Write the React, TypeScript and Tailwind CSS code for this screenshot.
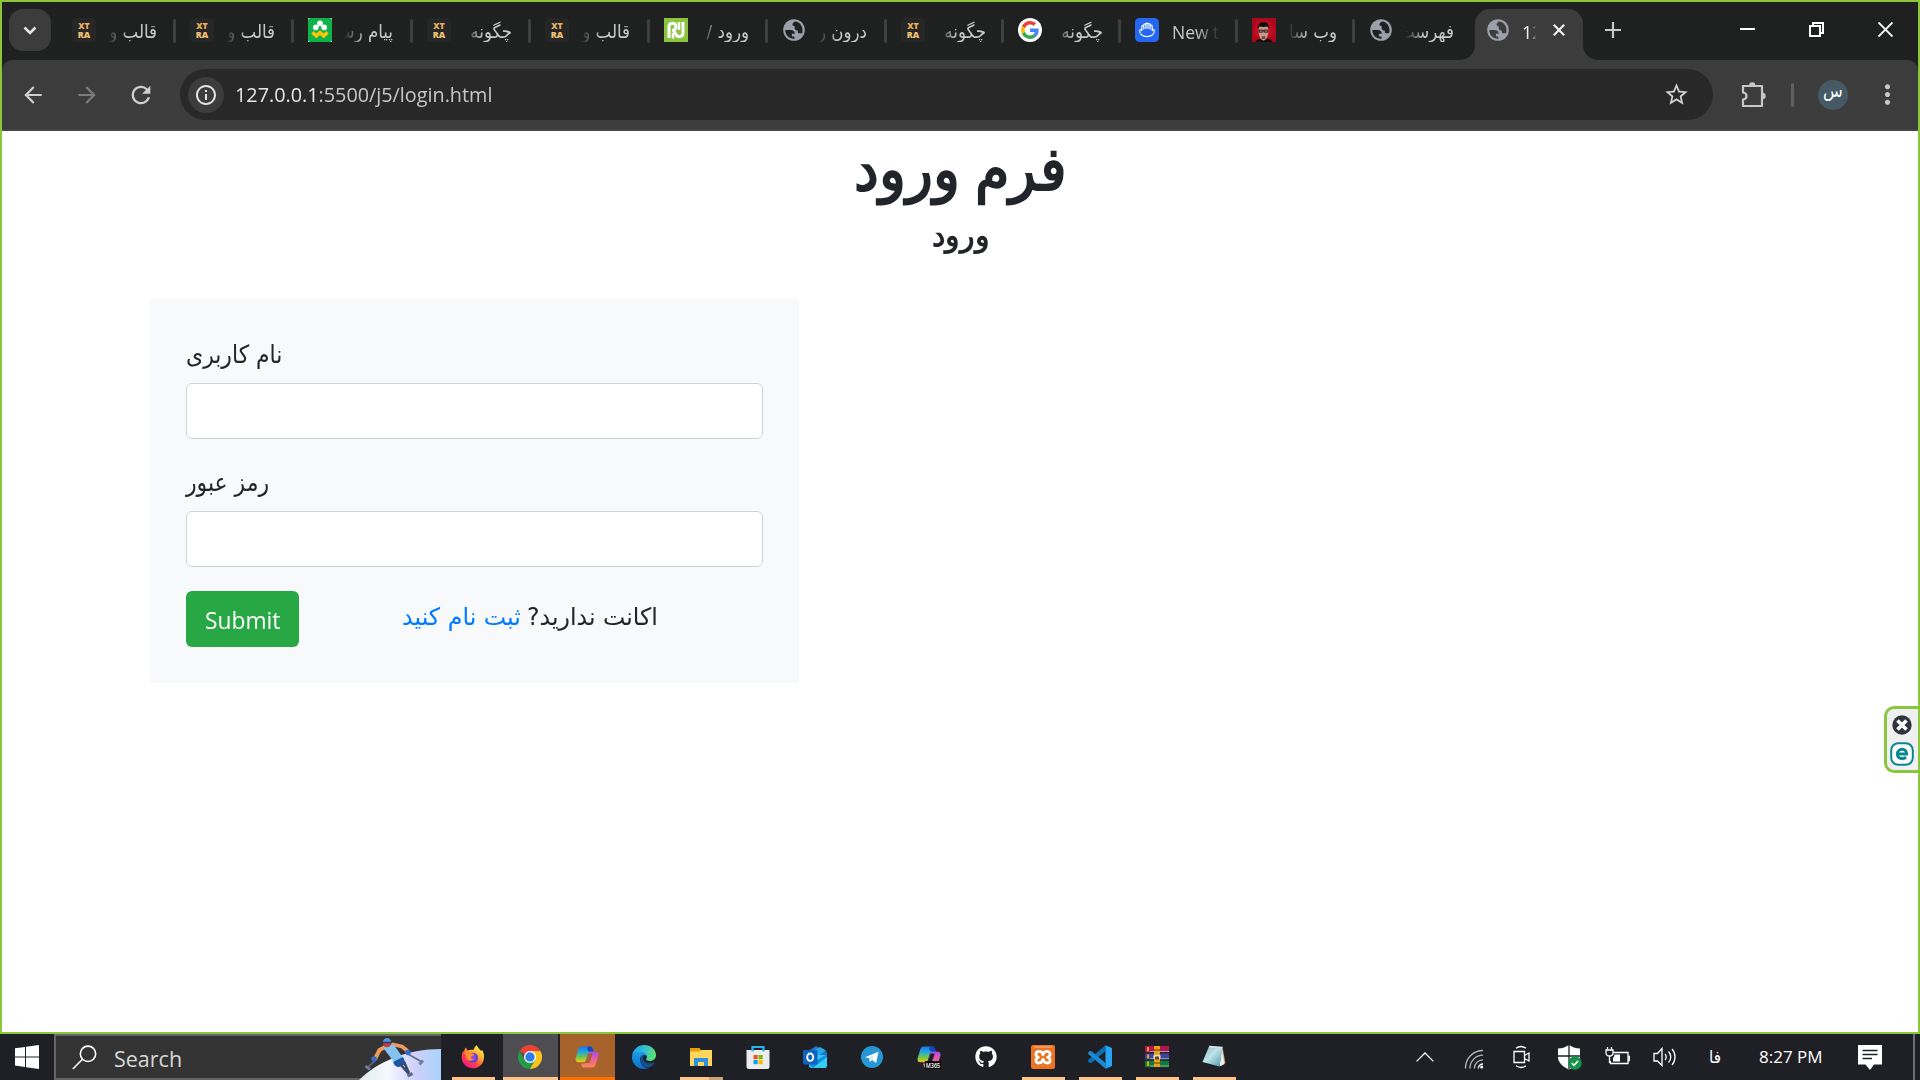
import type { ReactNode } from 'react';
import { MdArrowBack, MdArrowForward, MdStarBorder, MdRefresh, MdInfoOutline, MdMoreVert } from 'react-icons/md';
import { FaGithub } from 'react-icons/fa';

/* ---------- tab favicons ---------- */
const Xtra = () => (
  <svg viewBox="0 0 24 24" className="h-6 w-6">
    <rect width="24" height="24" rx="4" fill="#272626" />
    <text x="12" y="11.200" textAnchor="middle" textLength="11.500" lengthAdjust="spacingAndGlyphs" fontFamily="Open Sans, sans-serif" fontWeight="800" fontSize="8.6" fill="#e9b15c">XT</text>
    <text x="12" y="19.500" textAnchor="middle" textLength="12.5" lengthAdjust="spacingAndGlyphs" fontFamily="Open Sans, sans-serif" fontWeight="800" fontSize="8.6" fill="#f0c274">RA</text>
  </svg>
);
const Globe = ({ active }: { active?: boolean }) => (
  <svg viewBox="0 0 24 24" className="h-6 w-6 shrink-0">
    <circle cx="12" cy="12" r="10.800" fill="#9aa0aa" />
    <g className={active ? 'fill-[#3c3c3c]' : 'fill-[#1f2020]'}>
      <path d="M3.300 12h5.200c2.800 0 4.300 1.300 4.200 3.700h-2.800v2.700H12l1 2.200C7.800 21.300 3.300 17.500 3.300 12z" />
      <path d="M14.200 3.500c-2.400.2-3.700 1.500-3.700 3 0 1.200 1 1.700 2.200 1.700v1.900c0 1.600.9 2.300 2.300 2.300h.8v1.300c0 1 .7 1.500 1.700 1.500h2.700c1.200-5.300-1-10.200-6-11.700z" />
    </g>
  </svg>
);
const Messenger = () => (
  <svg viewBox="0 0 24 24" className="h-6 w-6">
    <rect width="24" height="24" fill="#fff" />
    <rect width="24" height="24" rx="2" fill="#0fb14b" />
    <g fill="#fff"><circle cx="12" cy="5.400" r="2.800" /><circle cx="7.800" cy="9.400" r="2.800" /><circle cx="16.200" cy="9.400" r="2.800" /></g>
    <path d="M4.500 14.300 8.300 18 12 14.500 15.700 18 19.500 14.300" fill="none" stroke="#fdc70c" strokeWidth="3.600" strokeLinejoin="round" />
  </svg>
);
const Rj = () => (
  <svg viewBox="0 0 24 24" className="h-6 w-6">
    <rect width="24" height="24" fill="#8bc540" />
    <g fill="none" stroke="#fff" strokeWidth="3" strokeLinejoin="round"><path d="M5 20V8.500C5 4 12 4 12 8.500c0 2-1 3.200-2.700 3.700L12 16.500c1.500 3 7 3 7-1.500V4" /><path d="M15 4v8" strokeWidth="2.500" /><path d="M9 15v5.500" strokeWidth="2.500" /></g>
  </svg>
);
const Google = () => (
  <svg viewBox="0 0 24 24" className="h-6 w-6">
    <circle cx="12" cy="12" r="12" fill="#fff" />
    <g transform="translate(3 3) scale(.375)">
      <path fill="#EA4335" d="M24 9.5c3.54 0 6.71 1.22 9.21 3.6l6.85-6.85C35.9 2.38 30.47 0 24 0 14.62 0 6.51 5.38 2.56 13.22l7.98 6.19C12.43 13.72 17.74 9.5 24 9.5z" />
      <path fill="#4285F4" d="M46.98 24.55c0-1.57-.15-3.09-.38-4.55H24v9.02h12.94c-.58 2.96-2.26 5.48-4.78 7.18l7.73 6c4.51-4.18 7.09-10.36 7.09-17.65z" />
      <path fill="#FBBC05" d="M10.53 28.59c-.48-1.45-.76-2.99-.76-4.59s.27-3.14.76-4.59l-7.98-6.19C.92 16.46 0 20.12 0 24c0 3.88.92 7.54 2.56 10.78l7.97-6.19z" />
      <path fill="#34A853" d="M24 48c6.48 0 11.93-2.13 15.89-5.81l-7.73-6c-2.15 1.45-4.92 2.3-8.16 2.3-6.26 0-11.57-4.22-13.47-9.91l-7.98 6.19C6.51 42.62 14.62 48 24 48z" />
    </g>
  </svg>
);
const Hand = () => (
  <svg viewBox="0 0 24 24" className="h-6 w-6">
    <rect width="24" height="24" rx="4.5" fill="#2468f2" />
    <path d="M4.700 12.600c0 3.600 3 6 7.300 6s7.300-2.400 7.300-6c0-1.500-2.100-1.500-2.100 0V8.200c0-1.500-2.100-1.500-2.100 0V6.700c0-1.500-2.100-1.500-2.100 0V6.200c0-1.500-2.100-1.500-2.100 0v.7c0-1.500-2.100-1.500-2.100 0v1.500c0-1.500-2-1.500-2 0v4.200c0-1.500-2.100-1.500-2.100 0zM8.800 8v3M10.900 7v3.500M13 6.700v3.800M15.100 8.200v2.800" fill="none" stroke="#fff" strokeWidth="1.200" strokeLinecap="round" strokeLinejoin="round" />
  </svg>
);
const Portrait = () => (
  <svg viewBox="0 0 24 24" className="h-6 w-6">
    <defs><radialGradient id="red"><stop offset="0" stopColor="#f0142c" /><stop offset="1" stopColor="#a8081c" /></radialGradient></defs>
    <rect width="24" height="24" fill="url(#red)" />
    <path d="M3.500 24c1-2.500 4-3.500 8.500-3.500s7.500 1 8.500 3.500z" fill="#160c0c" />
    <path d="M6.700 10c0-4 9.600-4 9.600 0v4c0 4-2.300 8.500-4.800 8.500s-4.800-4.500-4.800-8.500z" fill="#c9988a" />
    <path d="M6 11.500C3.500 1.500 19.500 1.500 17 11.500L15.800 8.500c-3 .6-5.500.6-8.600 0z" fill="#120d0e" />
    <path d="M7.200 12h3.600v2.200H7.200zM12.200 12h3.600v2.200h-3.600zM10.800 12.600h1.400" fill="#a5796f" stroke="#1b1315" strokeWidth=".8" />
    <path d="M9.500 18.300h4l-.7 2.700h-2.600z" fill="#6a4740" />
  </svg>
);

type TabInfo = { icon: ReactNode; title: string; w: string; ltr?: boolean; first?: boolean };
const tabs: TabInfo[] = [
  { icon: <Xtra />, title: 'قالب و', w: 'w-[118px]', first: true },
  { icon: <Xtra />, title: 'قالب و', w: 'w-[118px]' },
  { icon: <Messenger />, title: 'پیام رس', w: 'w-[119px]' },
  { icon: <Xtra />, title: 'چگونه', w: 'w-[118px]' },
  { icon: <Xtra />, title: 'قالب و', w: 'w-[119px]' },
  { icon: <Rj />, title: 'ورود /', w: 'w-[118px]' },
  { icon: <Globe />, title: 'درون ر', w: 'w-[119px]' },
  { icon: <Xtra />, title: 'چگونه', w: 'w-[117px]' },
  { icon: <Google />, title: 'چگونه', w: 'w-[117px]' },
  { icon: <Hand />, title: 'New t', w: 'w-[117px]', ltr: true },
  { icon: <Portrait />, title: 'وب سا', w: 'w-[117px]' },
  { icon: <Globe />, title: 'فهرست', w: 'w-[123px]' },
];

function Tab({ icon, title, w, ltr, first }: TabInfo) {
  return (
    <div className={`flex shrink-0 pt-4 ${w}`}>
      <div className={`mt-px h-6 w-[3px] rounded-sm ${first ? 'bg-transparent' : 'bg-[#3f3f3f]'}`} />
      <div className="ml-[14px] h-6 w-6">{icon}</div>
      <div
        dir={ltr ? 'ltr' : 'rtl'}
        className={
          ltr
            ? "ml-[13px] h-6 w-[48px] overflow-hidden whitespace-nowrap pt-px font-['Open_Sans','DejaVu_Sans_Condensed',sans-serif] text-[17.500px] leading-[26px] text-[#c9c9c9] [mask-image:linear-gradient(to_right,#000_50%,transparent)]"
            : "ml-3 h-6 w-[49px] overflow-hidden whitespace-nowrap pt-px font-['DejaVu_Sans_Condensed',sans-serif] text-[18.500px] leading-[26px] text-[#c9c9c9] [mask-image:linear-gradient(to_left,#000_60%,transparent)]"
        }
      >
        {title}
      </div>
    </div>
  );
}

function TabStrip() {
  return (
    <div className="flex h-[58px] bg-[#1f2020]">
      <div className="mt-[7px] mr-1 ml-[7px] flex h-[42px] w-[42px] shrink-0 items-center justify-center rounded-[14px] bg-[#3c3c3c]">
        <svg viewBox="0 0 14 9" className="h-[9px] w-[14px]"><path d="M1.500 1.500 7 7l5.500-5.500" fill="none" stroke="#e6e6e6" strokeWidth="2.600" /></svg>
      </div>
      {tabs.map((t, i) => <Tab key={i} {...t} />)}
      <div className="relative mt-[7px] flex h-[51px] w-[108px] shrink-0 items-start rounded-t-[15px] bg-[#3c3c3c] pt-[9px] pl-[11px]">
        <svg viewBox="0 0 15 15" className="absolute bottom-0 -left-[15px] h-[15px] w-[15px]"><path d="M15 0v15H0A15 15 0 0 0 15 0z" fill="#3c3c3c" /></svg>
        <svg viewBox="0 0 15 15" className="absolute -right-[15px] bottom-0 h-[15px] w-[15px]"><path d="M0 0v15h15A15 15 0 0 1 0 0z" fill="#3c3c3c" /></svg>
        <Globe active />
        <div className="ml-3 h-6 w-[14px] overflow-hidden pt-px font-['Open_Sans',sans-serif] text-[18px] leading-[26px] text-[#ececec] [mask-image:linear-gradient(to_right,#000_70%,transparent)]">12</div>
        <svg viewBox="0 0 12 12" className="mt-[6px] ml-[17px] h-3 w-3"><path d="m.8.8 10.400 10.400m0-10.400L.8 11.200" stroke="#f0f0f0" strokeWidth="2.200" /></svg>
      </div>
      <svg viewBox="0 0 16 16" className="mt-5 ml-[22px] h-4 w-4 shrink-0"><path d="M8 0v16M0 8h16" stroke="#c8c8c8" strokeWidth="2.200" /></svg>
      <svg viewBox="0 0 15 15" className="mt-5 ml-[119px] h-[15px] w-[15px] shrink-0"><path d="M0 7h15" stroke="#fff" strokeWidth="2" /></svg>
      <svg viewBox="0 0 15 15" className="mt-5 ml-[54px] h-[15px] w-[15px] shrink-0"><path d="M1 4h10v10H1zM4 4V1h10v10h-3" fill="none" stroke="#fff" strokeWidth="2" /></svg>
      <svg viewBox="0 0 15 15" className="mt-5 ml-[54px] h-[15px] w-[15px] shrink-0"><path d="m.5.5 14 14m0-14-14 14" stroke="#fff" strokeWidth="1.900" /></svg>
    </div>
  );
}

function Toolbar() {
  return (
    <div className="bg-[#1f2020]">
      <div className="flex h-[71px] items-center rounded-t-[10px] border-b-2 border-[#454545] bg-[#3c3c3c]">
        <MdArrowBack className="ml-[18px] h-[26px] w-[26px] text-[#cfcfcf]" />
        <MdArrowForward className="ml-[28px] h-[26px] w-[26px] text-[#7b7b7b]" />
        <MdRefresh className="ml-[27px] h-[28px] w-[28px] text-[#cfcfcf]" />
        <div className="ml-[25px] flex h-[51px] w-[1533px] items-center rounded-full bg-[#282828] pr-[23px] pl-2">
          <div className="flex h-9 w-9 items-center justify-center rounded-full bg-[#3c3c3c]">
            <MdInfoOutline className="h-6 w-6 text-[#e3e3e3]" />
          </div>
          <div className="ml-[11px] flex-1 font-['Open_Sans',sans-serif] text-[20px] leading-7 text-[#c7c7c7]"><span className="inline-block origin-left scale-x-[.99]"><span className="text-[#e6e6e6]">127.0.0.1</span>:5500/j5/login.html</span></div>
          <MdStarBorder className="h-[27px] w-[27px] text-[#d0d0d0]" />
        </div>
        <svg viewBox="0 0 25 26" className="ml-[28px] h-[26px] w-[25px]">
          <path d="M21 14V4H2v6.500c2.500.3 3.500 1.800 3.500 3.500S4.500 17.200 2 17.500V24h19z" fill="none" stroke="#c7c7c7" strokeWidth="2.200" strokeLinejoin="round" />
          <path d="M8 3.500a3.200 3.200 0 0 1 6.400 0zM21.500 10.800a3.200 3.200 0 0 1 0 6.400z" fill="#c7c7c7" />
        </svg>
        <div className="ml-[25px] h-6 w-[3px] rounded-full bg-[#606060]" />
        <div className="ml-[24px] flex h-[30px] w-[30px] items-center justify-center rounded-full bg-[#455a64]">
          <span className="-mt-[7px] font-['DejaVu_Sans_Condensed',sans-serif] text-[18px] leading-none text-white">س</span>
        </div>
        <MdMoreVert className="ml-[24px] h-[31px] w-[31px] text-[#c7c7c7]" />
      </div>
    </div>
  );
}

function Field({ label }: { label: string }) {
  return (
    <label className="mb-6 block">
      <span className="mb-3 block h-9 w-fit origin-left scale-x-[.975] pt-[2px] font-['DejaVu_Sans_Condensed',sans-serif] text-[25px] leading-9">{label}</span>
      <input className="block h-14 w-full rounded-[6px] border border-[#ced4da] bg-white px-[18px] outline-none" />
    </label>
  );
}

function Page() {
  return (
    <main className="flex flex-1 flex-col text-[#212529]">
      <h1 className="mt-3 h-[64px] self-center overflow-hidden text-center font-['Noto_Sans',sans-serif] text-[60px] leading-[49px] font-bold"><span className="inline-block scale-x-[.93]">فرم ورود</span></h1>
      <h2 className="mt-[9px] self-center text-center font-['Noto_Sans',sans-serif] text-[31px] leading-9 font-bold"><span className="inline-block scale-x-[.97]">ورود</span></h2>
      <form className="mt-[47px] ml-[148px] flex h-[384px] w-[649px] flex-col bg-[#f8f9fb] p-9">
        <Field label="نام کاربری" />
        <Field label="رمز عبور" />
        <div className="flex">
          <button type="button" className="h-14 w-[113px] rounded-[6px] bg-[#28a745] pt-[2px] font-['Open_Sans',sans-serif] text-[24px] leading-9 text-white"><span className="inline-block scale-x-[.95]">Submit</span></button>
          <p dir="rtl" className="ml-[103px] flex h-14 items-center font-['DejaVu_Sans',sans-serif] text-[24px] leading-9 whitespace-nowrap">
            <span className="-mr-1 ml-[5px] origin-left scale-x-[.985] pb-1">اکانت ندارید<span dir="ltr">?</span></span>
            <a className="origin-left scale-x-[.99] pb-1 text-[#007bff]">ثبت نام کنید</a>
          </p>
        </div>
      </form>
    </main>
  );
}

/* ---------- taskbar icons ---------- */
const S = 'h-6 w-6';
const Firefox = () => (
  <svg viewBox="0 0 24 24" className={S}>
    <defs>
      <linearGradient id="ff" x1=".85" y1=".1" x2=".2" y2=".95"><stop offset="0" stopColor="#fff04a" /><stop offset=".35" stopColor="#ffa92e" /><stop offset=".65" stopColor="#ff4343" /><stop offset="1" stopColor="#f0148c" /></linearGradient>
      <radialGradient id="fp"><stop offset="0" stopColor="#a050f5" /><stop offset="1" stopColor="#5a3ad0" /></radialGradient>
    </defs>
    <path d="M12.500 5C13 3 14.500 1 16 .3c.3 2.200 2.500 3.700 4 5.700.6-.3.800-.8.900-1.300 1.900 2.500 2.600 6 1.900 9.500C21.800 19.500 17.500 23.300 12 23.300S1.500 19.500.8 14c-.4-3.500.3-6.500 1.500-8.300l.7 1.500C3.300 5 4 3.500 5 2.600c.2 1.200.7 2 1.500 2.700 1.800-.7 4-.8 6-.3z" fill="url(#ff)" />
    <circle cx="12" cy="12.700" r="5" fill="url(#fp)" />
    <path d="M3 7.500c3-2 5.500-1 7 .5 1 1 3 .7 3.500 1.500-.5 1.500-3 1.200-3.500 2.500-.4 1.500 1 2.500 3 1.800-1 2.200-4.500 2.700-6.500.7C4.500 12.500 6 10.500 3 7.500z" fill="#ff9130" />
  </svg>
);
const Chrome = () => (
  <svg viewBox="0 0 24 24" className={S}>
    <path d="M12 12 1.600 6A12 12 0 0 1 22.400 6z" fill="#ea4335" /><path d="M12 12V6h10.400A12 12 0 0 1 12 24z" fill="#fcc31e" /><path d="M12 12 17.200 15 12 24A12 12 0 0 1 1.600 6l5.200 9z" fill="#279a48" />
    <circle cx="12" cy="12" r="6" fill="#fff" /><circle cx="12" cy="12" r="4.700" fill="#2a7de9" />
  </svg>
);
const Copilot = ({ m365 }: { m365?: boolean }) => (
  <svg viewBox="0 0 24 24" className={S}>
    <defs>
      <linearGradient id="ca" x1="0" y1="0" x2="0" y2="1"><stop offset="0" stopColor="#1877e8" /><stop offset=".35" stopColor="#1fa8e0" /><stop offset=".65" stopColor="#63c653" /><stop offset="1" stopColor="#f5c518" /></linearGradient>
      <linearGradient id="cb" x1="0" y1="0" x2="0" y2="1"><stop offset="0" stopColor="#a84df0" /><stop offset=".5" stopColor="#ee5da0" /><stop offset="1" stopColor="#fb8a4c" /></linearGradient>
    </defs>
    <path d="M6.500 1.500h8.800c1.500 0 2.100 1 2.600 2.600l.8 2.700h-3.200c-1.500 0-2.300.8-2.700 2l-1.900 6.400c-.4 1.300-1.200 2-2.600 2H3.500C1 17.200 0 15.500.7 13L3.400 4c.5-1.600 1.500-2.500 3.100-2.500z" fill="url(#ca)" />
    <path d="M12.500 1.500h2.800c1.500 0 2.100 1 2.600 2.600l.8 2.700h-3.200c-1.800 0-2.800-1-3.100-2.500z" fill="#1644c0" />
    <path d="M15.700 6.800h4.800c2.500 0 3.500 1.700 2.800 4.200l-2.700 9c-.5 1.600-1.500 2.500-3.100 2.500H9c-1.500 0-2.200-1-2.600-2.600l-.4-1.500h2.700c1.500 0 2.300-.8 2.700-2l1.600-7.600c.4-1.300 1.200-2 2.700-2z" fill="url(#cb)" />
    <path d="M13.700 8.500 10.500 18h4.200l3-9.500z" fill={m365 ? '#1f2026' : '#a8622c'} />
    {m365 && <g><rect x="8" y="16" width="16" height="8" fill="#080808" /><text x="16" y="22.600" textAnchor="middle" textLength="14.500" lengthAdjust="spacingAndGlyphs" fontFamily="Open Sans, sans-serif" fontWeight="600" fontSize="7.200" fill="#fff">M365</text></g>}
  </svg>
);
const Edge = () => (
  <svg viewBox="0 0 24 24" className={S}>
    <defs>
      <linearGradient id="e1" x1="0" y1=".3" x2="1" y2=".5"><stop offset="0" stopColor="#1b9de2" /><stop offset=".5" stopColor="#35c1d3" /><stop offset="1" stopColor="#5fe06a" /></linearGradient>
      <linearGradient id="e2" x1="0" y1="0" x2="0" y2="1"><stop offset="0" stopColor="#1aa0e8" /><stop offset="1" stopColor="#0f6cc8" /></linearGradient>
    </defs>
    <path d="M.1 11C.7 4.700 5.800 0 12 0c7 0 12 4.700 12 10 0 3.500-2.700 6-6 6-2.300 0-4-.7-4-1.700 0-.6.900-1 .9-2.600C14.900 9.400 12 7.500 9 7.500c-4 0-7 1-8.900 3.500z" fill="url(#e1)" />
    <path d="M0 12C.5 8.500 4 6.400 8 6.400c4 0 6.900 2.400 6.900 5-1-1.400-3-1.900-4.500-1-2.300 1.400-3 4-1.800 7 1.200 3 4 5.500 7 5.700C14.500 24 13 24 12 24 5.300 24-.2 18.500 0 12z" fill="url(#e2)" />
    <path d="M9.800 10.900c-3 3-1.800 9.700 5.800 12.200 3.200-.8 5.500-2.700 6.900-5 .3-.5-.1-.8-.6-.6-4.500 1.800-9.900.5-10.600-3.500-.1-1.200.1-2 .9-3-.8-.5-1.700-.5-2.400-.1z" fill="#124f91" />
  </svg>
);
const Explorer = () => (
  <svg viewBox="0 0 24 24" className={S}>
    <path d="M1 3h9.500L12 5v2H1z" fill="#e5a00d" /><path d="M1 6.500h9.500L12.500 5H23v16H1z" fill="#ffd55e" /><path d="M5 13h14v8h-4v-4H9v4H5z" fill="#2f90e0" />
  </svg>
);
const Store = () => (
  <svg viewBox="0 0 24 24" className={S}>
    <path d="M.5 5h23v16.500a2.500 2.500 0 0 1-2.500 2.500H3a2.500 2.500 0 0 1-2.500-2.500z" fill="#ececec" />
    <path d="M6.500 6.500V2h11v4.500" fill="none" stroke="#25b3ee" strokeWidth="2.200" />
    <path d="M7.500 10H11.700v4.200H7.500z" fill="#f25022" /><path d="M12.500 10H16.700v4.200H12.500z" fill="#7fba00" /><path d="M7.500 15H11.700v4.200H7.500z" fill="#00a4ef" /><path d="M12.500 15H16.700v4.200H12.500z" fill="#ffb900" />
  </svg>
);
const Outlook = () => (
  <svg viewBox="0 0 24 24" className={S}>
    <path d="M2 8 13 1l11 6v6H2z" fill="#1676c4" /><path d="M11 5 17 2l6 3.500-10 7z" fill="#29a8ea" /><path d="M6 10h18v10.500a2.500 2.500 0 0 1-2.500 2.500H8.500A2.500 2.500 0 0 1 6 20.500z" fill="#35cdf5" /><path d="M6 20 24 9v3L10 23z" fill="#1291df" />
    <rect y="5" width="14.500" height="14.500" rx="1.400" fill="#0f62c0" />
    <ellipse cx="7.200" cy="12.200" rx="3" ry="3.700" fill="none" stroke="#fff" strokeWidth="1.900" />
  </svg>
);
const Telegram = () => (
  <svg viewBox="0 0 24 24" className={S}>
    <circle cx="12" cy="12" r="11" fill="#2697d4" /><path d="M5 12.200 18.500 6.700l-2.300 11.400-4.200-3.200-2.200 2-.5-3.700z" fill="#fff" /><path d="m9.300 13.200 6-4-4.700 4.700-.8 3z" fill="#b9dcf0" />
  </svg>
);
const Xampp = () => (
  <svg viewBox="0 0 24 24" className={S}>
    <rect width="24" height="24" rx="2" fill="#ea7423" /><path d="M3 2h18" stroke="#f6b082" strokeWidth="1.200" />
    <path d="M12 9.700C11 5.500 4.800 5.300 4.900 9.300c0 1.800 1.300 2.600 2.500 3-1.600.4-2.600 1.500-2.500 3.200.2 3.800 6 3.200 7.100-1.200 1.100 4.400 6.900 5 7.100 1.200.1-1.700-.9-2.800-2.500-3.200 1.200-.4 2.500-1.200 2.500-3C19.200 5.300 13 5.500 12 9.700z" fill="none" stroke="#fff" strokeWidth="2.800" strokeLinejoin="round" />
  </svg>
);
const Vscode = () => (
  <svg viewBox="0 0 24 24" className={S}>
    <path d="M17.500.2 17.500 6 3.500 17.800 1.800 18 .2 16.300V15z" fill="#0d6fb4" /><path d="M17.500 23.800V18L3.500 6.200 1.800 6 .2 7.700V9z" fill="#1b8ad6" /><path d="M17.500.2 24 3v18l-6.500 2.800z" fill="#27a4f2" />
  </svg>
);
const WinRar = () => (
  <svg viewBox="0 0 24 24" className={S}>
    <rect y="1" width="24" height="6.500" fill="#b3164e" /><rect y="8.200" width="24" height="6.500" fill="#3a4699" /><rect y="15.400" width="24" height="6.800" fill="#0d7a35" />
    <path d="M5 6.500h19M5 13.700h19M5 21h19" stroke="#b9b6c6" strokeWidth=".8" /><path d="M0 7.800h24M0 15h24" stroke="#1a1424" strokeWidth=".8" />
    <path d="M3 2v4.500M3 9.500v4M3 16.500V21" stroke="#f0a020" strokeWidth="2" />
    <rect x="9" y="1" width="6" height="21" fill="#e9a21c" /><path d="M9 5h6M9 18h6" stroke="#8a5a0c" strokeWidth="1.300" /><rect x="8.500" y="10" width="7" height="4" rx="1" fill="#eee4c8" /><path d="M10 11.500h4v3h-4z" fill="#5d4630" />
  </svg>
);
const Notes = () => (
  <svg viewBox="0 0 24 24" className={S}>
    <defs><linearGradient id="n" x1="0" y1="0" x2="1" y2="1"><stop offset="0" stopColor="#8fb3bd" /><stop offset=".45" stopColor="#bfe3ea" /><stop offset="1" stopColor="#4c98a8" /></linearGradient></defs>
    <path d="M20.500 2 23.500 18l-5 3z" fill="#b89252" /><path d="M20 2 22.500 19l-5 2.500z" fill="#e8eef0" /><path d="M7 1.500 20.500 2.500 17.500 21.500.5 17z" fill="url(#n)" /><path d="M7 1.500 20.500 2.500" stroke="#dfe8ea" strokeWidth="1.500" />
  </svg>
);
const Skier = () => (
  <svg viewBox="0 0 84 44" className="h-[44px] w-[84px]">
    <defs><linearGradient id="snow" x1="0" y1="0" x2="1" y2="0"><stop offset="0" stopColor="#dcebf0" /><stop offset=".35" stopColor="#f5f9ff" /><stop offset=".7" stopColor="#cdd0fb" /><stop offset="1" stopColor="#a9d3fb" /></linearGradient></defs>
    <path d="M2 44C20 26 50 13 84 13v31z" fill="url(#snow)" />
    <path d="M20 23 11 31M51 18l14 8" stroke="#5f7088" strokeWidth="1.500" /><path d="m8.500 30 4.500 3.500M62.500 28.500l3.500-4" stroke="#70829e" strokeWidth="2.800" />
    <path d="M29 10.500 22.500 14l-4 8" fill="none" stroke="#f09a62" strokeWidth="4" strokeLinecap="round" strokeLinejoin="round" /><path d="m36 8.500 9 2 5 4" fill="none" stroke="#f09a62" strokeWidth="3.800" strokeLinecap="round" strokeLinejoin="round" />
    <circle cx="17" cy="23" r="2.800" fill="#3569c8" /><circle cx="51" cy="16.500" r="2.800" fill="#3569c8" />
    <path d="M27 13c0-3 6-5 10-4l10 14c-1 4-7 5-10 3z" fill="#84c3f0" /><path d="m36 26 10-5 3 7-7 3c-3 0-5-2-6-5z" fill="#1d56a8" />
    <path d="m43 28 9 10M47 26l5 11" stroke="#39496b" strokeWidth="2.600" /><path d="m50.500 40 5-2.500" stroke="#5d6f8c" strokeWidth="3.400" />
    <circle cx="30" cy="7.500" r="3.800" fill="#c83a3c" /><path d="M25.800 6.500c0-6 8.400-6 8.400 0z" fill="#5a93d8" /><path d="M26 6.500h8" stroke="#1c4377" strokeWidth="1.600" />
  </svg>
);

type TaskItem = { icon: ReactNode; bg?: string; bar?: string };
const apps: TaskItem[] = [
  { icon: <Firefox />, bar: 'w-[43px] bg-[#ffc485]' },
  { icon: <Chrome />, bg: 'bg-[#4d4d52]', bar: 'w-[55px] bg-[#ffc485]' },
  { icon: <Copilot />, bg: 'bg-[#a8622c]', bar: 'w-[55px] bg-[#ff6f00]' },
  { icon: <Edge /> },
  { icon: <Explorer />, bar: 'w-[43px] bg-[#ffc485] border-r-[14px] border-[#cfa274]' },
  { icon: <Store /> },
  { icon: <Outlook /> },
  { icon: <Telegram /> },
  { icon: <Copilot m365 /> },
  { icon: <FaGithub className="h-[22px] w-[22px] text-white" /> },
  { icon: <Xampp />, bar: 'w-[43px] bg-[#ffc485]' },
  { icon: <Vscode />, bar: 'w-[43px] bg-[#ffc485]' },
  { icon: <WinRar />, bar: 'w-[43px] bg-[#ffc485]' },
  { icon: <Notes />, bar: 'w-[43px] bg-[#ffc485]' },
];

const line = { fill: 'none', stroke: '#fff', strokeWidth: 1.3 } as const;

function Taskbar() {
  return (
    <footer className="flex h-[46px] bg-[#1f2026]">
      <div className="flex w-[54px] items-center justify-center">
        <svg viewBox="0 0 24 24" className="h-6 w-6"><path d="M0 3.300 10 2v9.500H0zM11 1.800 24 0v11.500H11zM0 12.500h10V22L0 20.600zM11 12.500h13V24l-13-1.800z" fill="#fff" /></svg>
      </div>
      <div className="flex h-[46px] w-[387px] border-2 border-r-0 border-[#646464] bg-[#333]">
        <svg viewBox="0 0 25 25" className="mt-[9px] ml-[16px] h-[25px] w-[25px]"><circle cx="16" cy="8.800" r="7.700" fill="none" stroke="#fff" strokeWidth="1.600" /><path d="M10.500 14.300.8 24" stroke="#fff" strokeWidth="1.600" /></svg>
        <div className="mt-[7px] ml-[17px] flex-1 font-['Open_Sans',sans-serif] text-[21.500px] leading-8 text-[#d8d8d8]">Search</div>
        <div className="h-[44px] w-[84px]"><Skier /></div>
      </div>
      <div className="ml-[5px] flex gap-[2px]">
        {apps.map((a, i) => (
          <div key={i} className={`flex h-[46px] w-[55px] flex-col items-center ${a.bg ?? ''}`}>
            <div className="flex h-[43px] items-center pt-[3px] pr-[2px]">{a.icon}</div>
            {a.bar && <div className={`h-[3px] ${a.bar}`} />}
          </div>
        ))}
      </div>
      <div className="ml-[159px] flex items-center">
        <div className="flex w-[48px] justify-center"><svg viewBox="0 0 18 10" className="h-[10px] w-[18px]"><path d="m.6 9.400 8.400-8.400 8.400 8.400" {...line} /></svg></div>
        <div className="flex w-[49px] justify-center"><svg viewBox="0 0 20 20" className="mt-[3px] h-5 w-5"><path d="M1.500 19.500A17.500 17.500 0 0 1 19 1.500M6 19.500A13 13 0 0 1 19 6.200M10.300 19.500a8.700 8.700 0 0 1 8.700-8.700" {...line} stroke="#b8b8bc" /><path d="M14.300 19.500a4.700 4.700 0 0 1 4.700-4.500" {...line} /><circle cx="17.700" cy="18" r="1.500" fill="#fff" /></svg></div>
        <div className="flex w-[47px] justify-center"><svg viewBox="0 0 18 24" className="h-6 w-[18px]"><path d="M1 6.500h10.500v11H1zM11.500 10.500 16 8v8l-4.500-2.500M3 3.200c3-2 7-2 10 0M3 20.800c3 2 7 2 10 0" {...line} /></svg></div>
        <div className="flex w-[48px] justify-center"><svg viewBox="0 0 25 25" className="h-[25px] w-[25px]"><path d="M12 0c3 2 6.500 3.300 11 3.500V12c0 5-4 9.500-11 12.500C5 21.500 1 17 1 12V3.500C5.500 3.300 9 2 12 0z" fill="#fff" /><path d="M12 0v24M1 11h22" stroke="#1f2026" strokeWidth="1.300" /><circle cx="18" cy="18" r="6.800" fill="#15924b" /><path d="m14.800 18.200 2.300 2.200 4-4.500" fill="none" stroke="#fff" strokeWidth="1.600" /></svg></div>
        <div className="flex w-[48px] justify-center"><svg viewBox="0 0 25 20" className="-mt-px h-5 w-[25px]"><path d="M8 5.500h15v11H5.500V14M23.500 9.500h1v4h-1M2.500 0v3M6.500 0v3M1 3h7v3c0 2-1.500 3-3.500 3S1 8 1 6zM4.500 9v7" {...line} /><path d="M9.500 7.500h5.500v7H8v-4c1 0 1.500-1.500 1.500-3z" fill="#fff" /></svg></div>
        <div className="flex w-[47px] justify-center"><svg viewBox="0 0 23 20" className="h-5 w-[23px]"><path d="M1 6.500h3.500l4.500-5v17L4.500 14H1zM12 7c1.500 1.500 1.500 4.500 0 6M15.500 4.500c3 3 3 8 0 11M19 2c4 4.500 4 11.500 0 16" {...line} /></svg></div>
        <div className="w-[54px] pt-px text-center font-['DejaVu_Sans_Condensed',sans-serif] text-[17px] text-white">فا</div>
        <div className="ml-[17px] w-[68px] font-['Open_Sans',sans-serif] text-[17px] whitespace-nowrap text-white">8:27 PM</div>
        <svg viewBox="0 0 24 25" className="ml-[31px] h-[25px] w-6"><path d="M0 0h24v19.500h-8L12 25l-4.500-5.500H0z" fill="#fff" /><path d="M4.500 5.500h15M4.500 9.500h15M4.500 13.500H14" stroke="#1f2026" strokeWidth="1.300" /></svg>
      </div>
      <div className="ml-auto h-full w-[2px] bg-[#6d6e74]" />
      <div className="w-[5px]" />
    </footer>
  );
}

export default function App() {
  return (
    <div className="relative flex h-[1080px] w-[1920px] flex-col overflow-hidden bg-white">
      <div className="flex h-[1034px] flex-col border-2 border-[#8bc63f]">
        <TabStrip />
        <Toolbar />
        <Page />
      </div>
      <Taskbar />
      <div className="absolute top-[706px] right-0 flex h-[67px] w-9 flex-col items-center gap-[7px] rounded-l-[10px] border-[3px] border-r-2 border-[#8bc63f] bg-[#f0f0f1] pt-[6px] pr-[1px]">
        <svg viewBox="0 0 20 20" className="h-5 w-5 shrink-0"><circle cx="10" cy="10" r="9.700" fill="#2f343d" /><path d="m5.500 5.500 9 9m0-9-9 9" stroke="#fff" strokeWidth="3.600" /></svg>
        <svg viewBox="0 0 24 24" className="h-6 w-6 shrink-0"><rect x="1.200" y="1.200" width="21.600" height="21.600" rx="7" fill="#fff" stroke="#0b8793" strokeWidth="2" /><path d="M6.700 12h10c0-6.500-9.300-6.200-9.300 0 0 5 5.300 5.500 8.800 3.300" fill="none" stroke="#0b8793" strokeWidth="2.900" /></svg>
      </div>
    </div>
  );
}
